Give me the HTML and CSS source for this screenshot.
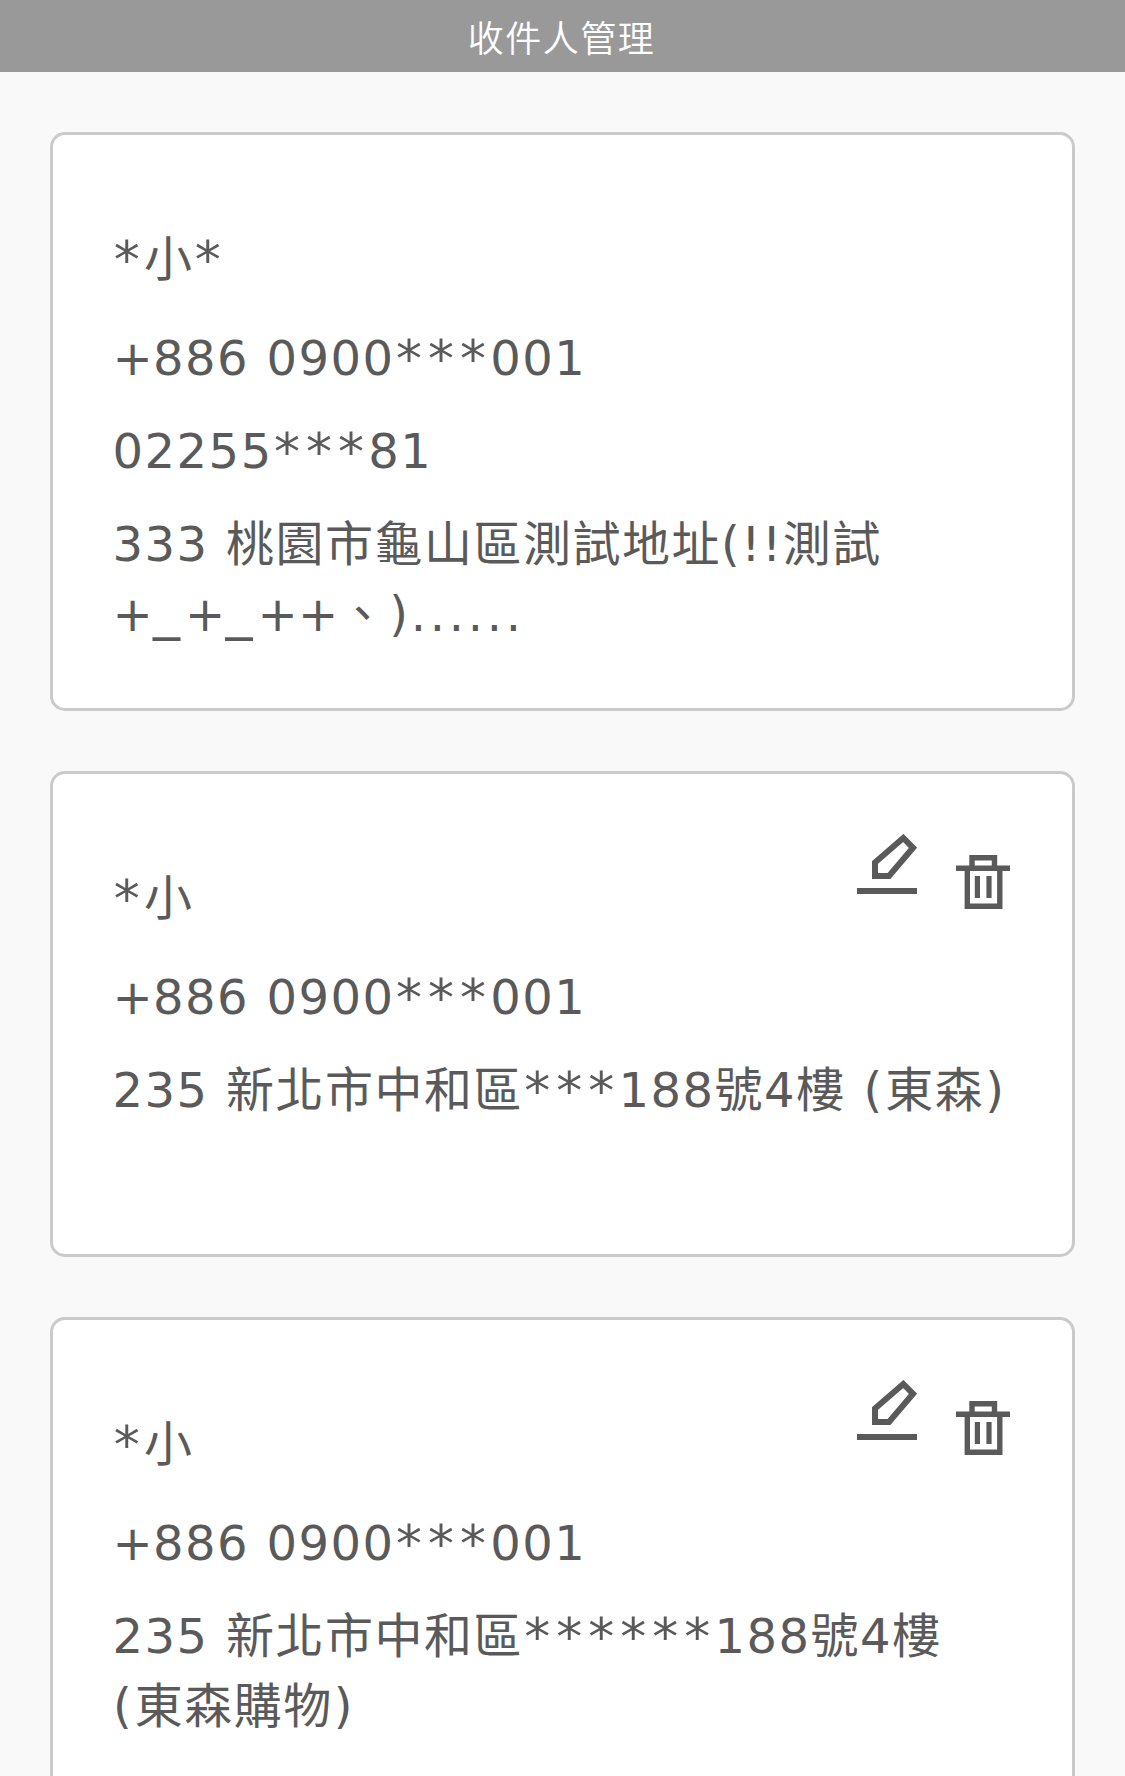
FILE: index.html
```html
<!DOCTYPE html>
<html lang="zh-Hant">
<head>
<meta charset="utf-8">
<title>收件人管理</title>
<link rel="stylesheet" href="styles.css">
</head>
<body>
<svg class="symbols" aria-hidden="true">
  <symbol id="edit" viewBox="0 0 60 60">
    <path d="M18 28.5L46.3 4L56 13.8L32 42H18Z" fill="none" stroke="currentColor" stroke-width="6"/>
    <path d="M0 57H60" stroke="currentColor" stroke-width="6"/>
  </symbol>
  <symbol id="trash" viewBox="0 0 54 54">
    <path d="M0 13.2H54M16 13V2.7H38.5V13M11.3 13V51.2H43.8V13" fill="none" stroke="currentColor" stroke-width="5.4"/>
    <path d="M21.4 21V43M33 21V43" stroke="currentColor" stroke-width="5.2"/>
  </symbol>
</svg>
<header class="header">收件人管理</header>
<main class="list">
  <article class="card card-first">
    <p class="name"><span class="star">*</span>小<span class="star">*</span></p>
    <p class="line"><span class="plus">+</span>886 0900<span class="star">***</span>001</p>
    <p class="line">02255<span class="star">***</span>81</p>
    <p class="line">333 桃園市龜山區測試地址(!!測試<br><span class="plus">+</span><span class="under">_</span><span class="plus">+</span><span class="under">_</span><span class="plus">++</span>、<span class="close">)</span><span class="dots">......</span></p>
  </article>
  <article class="card card-second">
    <div class="actions"><svg class="edit"><use href="#edit"/></svg><svg class="trash"><use href="#trash"/></svg></div>
    <p class="name"><span class="star">*</span>小</p>
    <p class="line"><span class="plus">+</span>886 0900<span class="star">***</span>001</p>
    <p class="line">235 新北市中和區<span class="star">***</span>188號4樓 <span class="open">(</span>東森<span class="close">)</span></p>
  </article>
  <article class="card card-third">
    <div class="actions"><svg class="edit"><use href="#edit"/></svg><svg class="trash"><use href="#trash"/></svg></div>
    <p class="name"><span class="star">*</span>小</p>
    <p class="line"><span class="plus">+</span>886 0900<span class="star">***</span>001</p>
    <p class="line">235 新北市中和區<span class="star">******</span>188號4樓<br><span class="open">(</span>東森購物<span class="close">)</span></p>
  </article>
</main>
</body>
</html>
```
FILE: styles.css
```css
* { box-sizing: border-box; }
body { margin: 0; background: #f9f9f9; color: #5a5a5a; font-family: "DejaVu Sans", "Noto Sans CJK TC", sans-serif; }
.symbols { display: none; }
.header { height: 72px; padding-right: 2px; background: #999; color: #fff; text-align: center; font: 350 36px/73px "Noto Sans CJK TC", sans-serif; letter-spacing: 1.5px; }
.list { display: flex; flex-direction: column; gap: 60px; padding: 60px 50px 0; }
.card { position: relative; flex: none; border: 3px solid #cacaca; border-radius: 15px; background: #fff; padding: 89px 60px 0 59.5px; font-size: 48px; line-height: 70px; letter-spacing: 1.5px; word-spacing: 0.6px; white-space: nowrap; }
.card-first { height: 579px; }
.card-second { height: 486px; }
.card-third { height: 459px; border-bottom: 0; border-radius: 15px 15px 0 0; }
.name, .line { margin: 0; }
.name { height: 70px; margin-bottom: 29px; }
.line { height: 70px; margin-bottom: 23px; }

.star { margin: 0 -1.8px 0 1.3px; font-size: 52px; line-height: 0; letter-spacing: 6px; vertical-align: -2px; }
.plus { letter-spacing: 0.3px; }
.under { font-size: 54px; line-height: 0; letter-spacing: 5px; vertical-align: 3px; }
.open { margin: 0 1.5px 0 0.5px; }
.close { margin: 0 1.5px 0 1px; }
.dots { letter-spacing: 3.7px; }

.actions { position: absolute; top: 60px; right: 62px; display: flex; gap: 39px; }
.edit { width: 60px; height: 60px; }
.trash { width: 54px; height: 54px; margin-top: 21px; }
```
